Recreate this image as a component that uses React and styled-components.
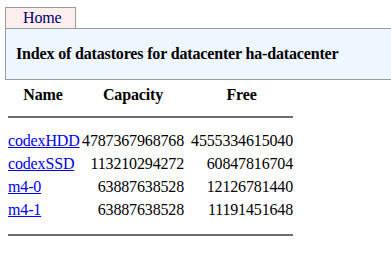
import React from "react";
import styled, { createGlobalStyle } from "styled-components";

const GlobalStyle = createGlobalStyle`
  body {
    margin: 0;
    background: #ffffff;
  }
`;

const Page = styled.div`
  width: 391px;
  height: 279px;
  overflow: hidden;
  font-family: "Liberation Serif", serif;
  font-size: 16px;
  letter-spacing: -0.16px;
  color: #000000;
`;

// Navigation tabs
const NavBar = styled.div`
  display: flex;
  padding: 7px 0 0 5px;
`;

const Tab = styled.div`
  box-sizing: border-box;
  width: 71px;
  height: 21px;
  padding-left: 17px;
  border: 1px solid #9a9a9a;
  border-bottom: none;
  background: ${(p) => (p.selected ? "#ffeeee" : "#ffffff")};
  color: #000066;
  line-height: 20px;
`;

// Title panel
const TitlePanel = styled.div`
  box-sizing: border-box;
  margin-left: 5px;
  width: 420px;
  height: 52px;
  border: 1px solid #9a9a9a;
  background: #eef6ff;
  display: flex;
  align-items: center;
  padding-left: 10px;
`;

const Title = styled.div`
  font-weight: bold;
`;

// Datastore listing
const Listing = styled.div`
  display: grid;
  grid-template-columns: 70px 106px 109px;
  width: 285px;
  margin: 3px 0 0 8px;
`;

const Cell = styled.div`
  line-height: 23px;
  height: 23px;
  white-space: nowrap;
  text-align: ${(p) => p.align || "left"};
  font-weight: ${(p) => (p.head ? "bold" : "normal")};
  padding-left: ${(p) => p.indent || 0}px;
`;

const Rule = styled.div`
  grid-column: 1 / -1;
  height: 2px;
  background: #6e6e6e;
  margin: ${(p) => p.margin};
`;

const DsLink = styled.a`
  color: #0000ee;
  text-decoration: underline;
`;

const datastores = [
  { name: "codexHDD", capacity: "4787367968768", free: "4555334615040" },
  { name: "codexSSD", capacity: "113210294272", free: "60847816704" },
  { name: "m4-0", capacity: "63887638528", free: "12126781440" },
  { name: "m4-1", capacity: "63887638528", free: "11191451648" },
];

export default function App() {
  return (
    <Page>
      <GlobalStyle />
      <NavBar>
        <Tab selected>Home</Tab>
      </NavBar>
      <TitlePanel>
        <Title>Index of datastores for datacenter ha-datacenter</Title>
      </TitlePanel>
      <Listing>
        <Cell head align="center">Name</Cell>
        <Cell head align="center" indent={4}>Capacity</Cell>
        <Cell head align="center" indent={6}>Free</Cell>
        <Rule margin="10px 0 11px 0" />
        {datastores.map((ds) => (
          <React.Fragment key={ds.name}>
            <Cell>
              <DsLink href="#">{ds.name}</DsLink>
            </Cell>
            <Cell align="right">{ds.capacity}</Cell>
            <Cell align="right">{ds.free}</Cell>
          </React.Fragment>
        ))}
        <Rule margin="13px 0 0 0" />
      </Listing>
    </Page>
  );
}
